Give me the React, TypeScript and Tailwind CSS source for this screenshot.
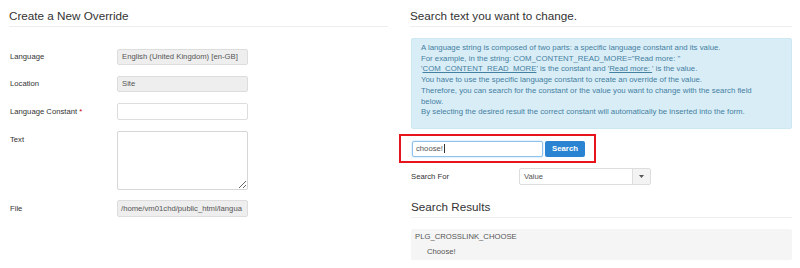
import React from "react";

function FieldRow({ label, children }: { label: React.ReactNode; children: React.ReactNode }) {
  return (
    <div className="flex items-center">
      <div className="w-[108px] pl-[1px] text-[7.7px] text-[#333]">{label}</div>
      {children}
    </div>
  );
}

export default function App() {
  return (
    <div className="flex h-[268px] w-[800px] overflow-hidden bg-white font-['Liberation_Sans',Arial,sans-serif] text-[#333]">
      {/* left column */}
      <div className="w-[400px] pl-[9px] pr-[12px]">
        <h3 className="border-b border-[#eee] pb-[3px] pt-[9px] text-[11.7px] leading-[14px] text-[#333]">
          Create a New Override
        </h3>

        <div className="mt-[22px] flex flex-col gap-[11px]">
          <FieldRow label="Language">
            <div className="flex h-[16px] w-[131px] items-center rounded-[2px] border border-[#ddd] bg-[#eee] px-[4px] text-[7.7px] text-[#555]">
              English (United Kingdom) [en-GB]
            </div>
          </FieldRow>
          <FieldRow label="Location">
            <div className="flex h-[16px] w-[131px] items-center rounded-[2px] border border-[#ddd] bg-[#eee] px-[4px] text-[7.7px] text-[#555]">
              Site
            </div>
          </FieldRow>
          <FieldRow
            label={
              <>
                Language Constant <span className="text-[#c00]">*</span>
              </>
            }
          >
            <div className="h-[17px] w-[131px] rounded-[2px] border border-[#ddd] bg-white" />
          </FieldRow>
          <div className="flex items-start">
            <div className="w-[108px] pl-[1px] pt-[3px] text-[7.7px] text-[#333]">Text</div>
            <textarea className="h-[59px] w-[131px] rounded-[2px] border border-[#d6d6d6] bg-white outline-none" />
          </div>
        </div>

        <div className="mt-[10px]">
          <FieldRow label="File">
            <div className="flex h-[17px] w-[131px] items-center overflow-hidden whitespace-nowrap rounded-[2px] border border-[#ddd] bg-[#eee] px-[3px] text-[7.7px] text-[#555]">
              /home/vm01chd/public_html/langua
            </div>
          </FieldRow>
        </div>
      </div>

      {/* right column */}
      <div className="w-[400px] pl-[10px] pr-[8px]">
        <h3 className="border-b border-[#eee] pb-[3px] pt-[9px] text-[11.7px] leading-[14px] text-[#333]">
          Search text you want to change.
        </h3>

        <div className="ml-[1px] mt-[11px] rounded-[2px] border border-[#cde8f3] bg-[#d9edf7] pb-[10px] pl-[9px] pt-[4px] text-[7.8px] leading-[10.7px] text-[#44809f]">
          A language string is composed of two parts: a specific language constant and its value.
          <br />
          For example, in the string: COM_CONTENT_READ_MORE="Read more: "
          <br />
          '<span className="underline">COM_CONTENT_READ_MORE</span>' is the constant and '
          <span className="underline">Read more: </span>' is the value.
          <br />
          You have to use the specific language constant to create an override of the value.
          <br />
          Therefore, you can search for the constant or the value you want to change with the search field
          <br />
          below.
          <br />
          By selecting the desired result the correct constant will automatically be inserted into the form.
        </div>

        <div className="-ml-[11px] mt-[5px] flex h-[29px] w-[197px] items-start border-2 border-[#e8141c] pl-[11px] pt-[5px]">
          <div className="flex h-[16px] w-[131px] items-center rounded-[2px] border border-[#8ec2ec] bg-white px-[3px] text-[7.7px] text-[#555] shadow-[0_0_2px_rgba(82,168,236,0.5)]">
            choose!
            <span className="ml-[1px] h-[9px] w-px bg-[#333]" />
          </div>
          <button
            type="button"
            className="ml-[2px] flex h-[16px] w-[40px] items-center justify-center rounded-[2px] bg-[#2b84d2] text-[7.8px] font-bold text-white"
          >
            Search
          </button>
        </div>

        <div className="mt-[5px] flex items-center">
          <div className="w-[109px] pl-[1px] text-[7.7px] text-[#333]">Search For</div>
          <div className="flex h-[17px] w-[132px] items-stretch rounded-[2px] border border-[#ddd] bg-white">
            <div className="flex flex-1 items-center pl-[4px] text-[7.7px] text-[#555]">Value</div>
            <div className="flex w-[18px] items-center justify-center border-l border-[#ddd] bg-[#f3f3f3]">
              <svg width="5" height="3" viewBox="0 0 5 3">
                <path d="M0 0 L5 0 L2.5 3 Z" fill="#555" />
              </svg>
            </div>
          </div>
        </div>

        <h3 className="ml-[1px] mt-[15px] border-b border-[#eee] pb-[3px] text-[11.7px] leading-[14px] text-[#333]">
          Search Results
        </h3>

        <div className="ml-[1px] mt-[11px] h-[31px] rounded-[2px] bg-[#f5f5f5] text-[7.7px] leading-[15px] text-[#555]">
          <div className="pl-[4px]">PLG_CROSSLINK_CHOOSE</div>
          <div className="pl-[16px]">Choose!</div>
        </div>
      </div>
    </div>
  );
}
